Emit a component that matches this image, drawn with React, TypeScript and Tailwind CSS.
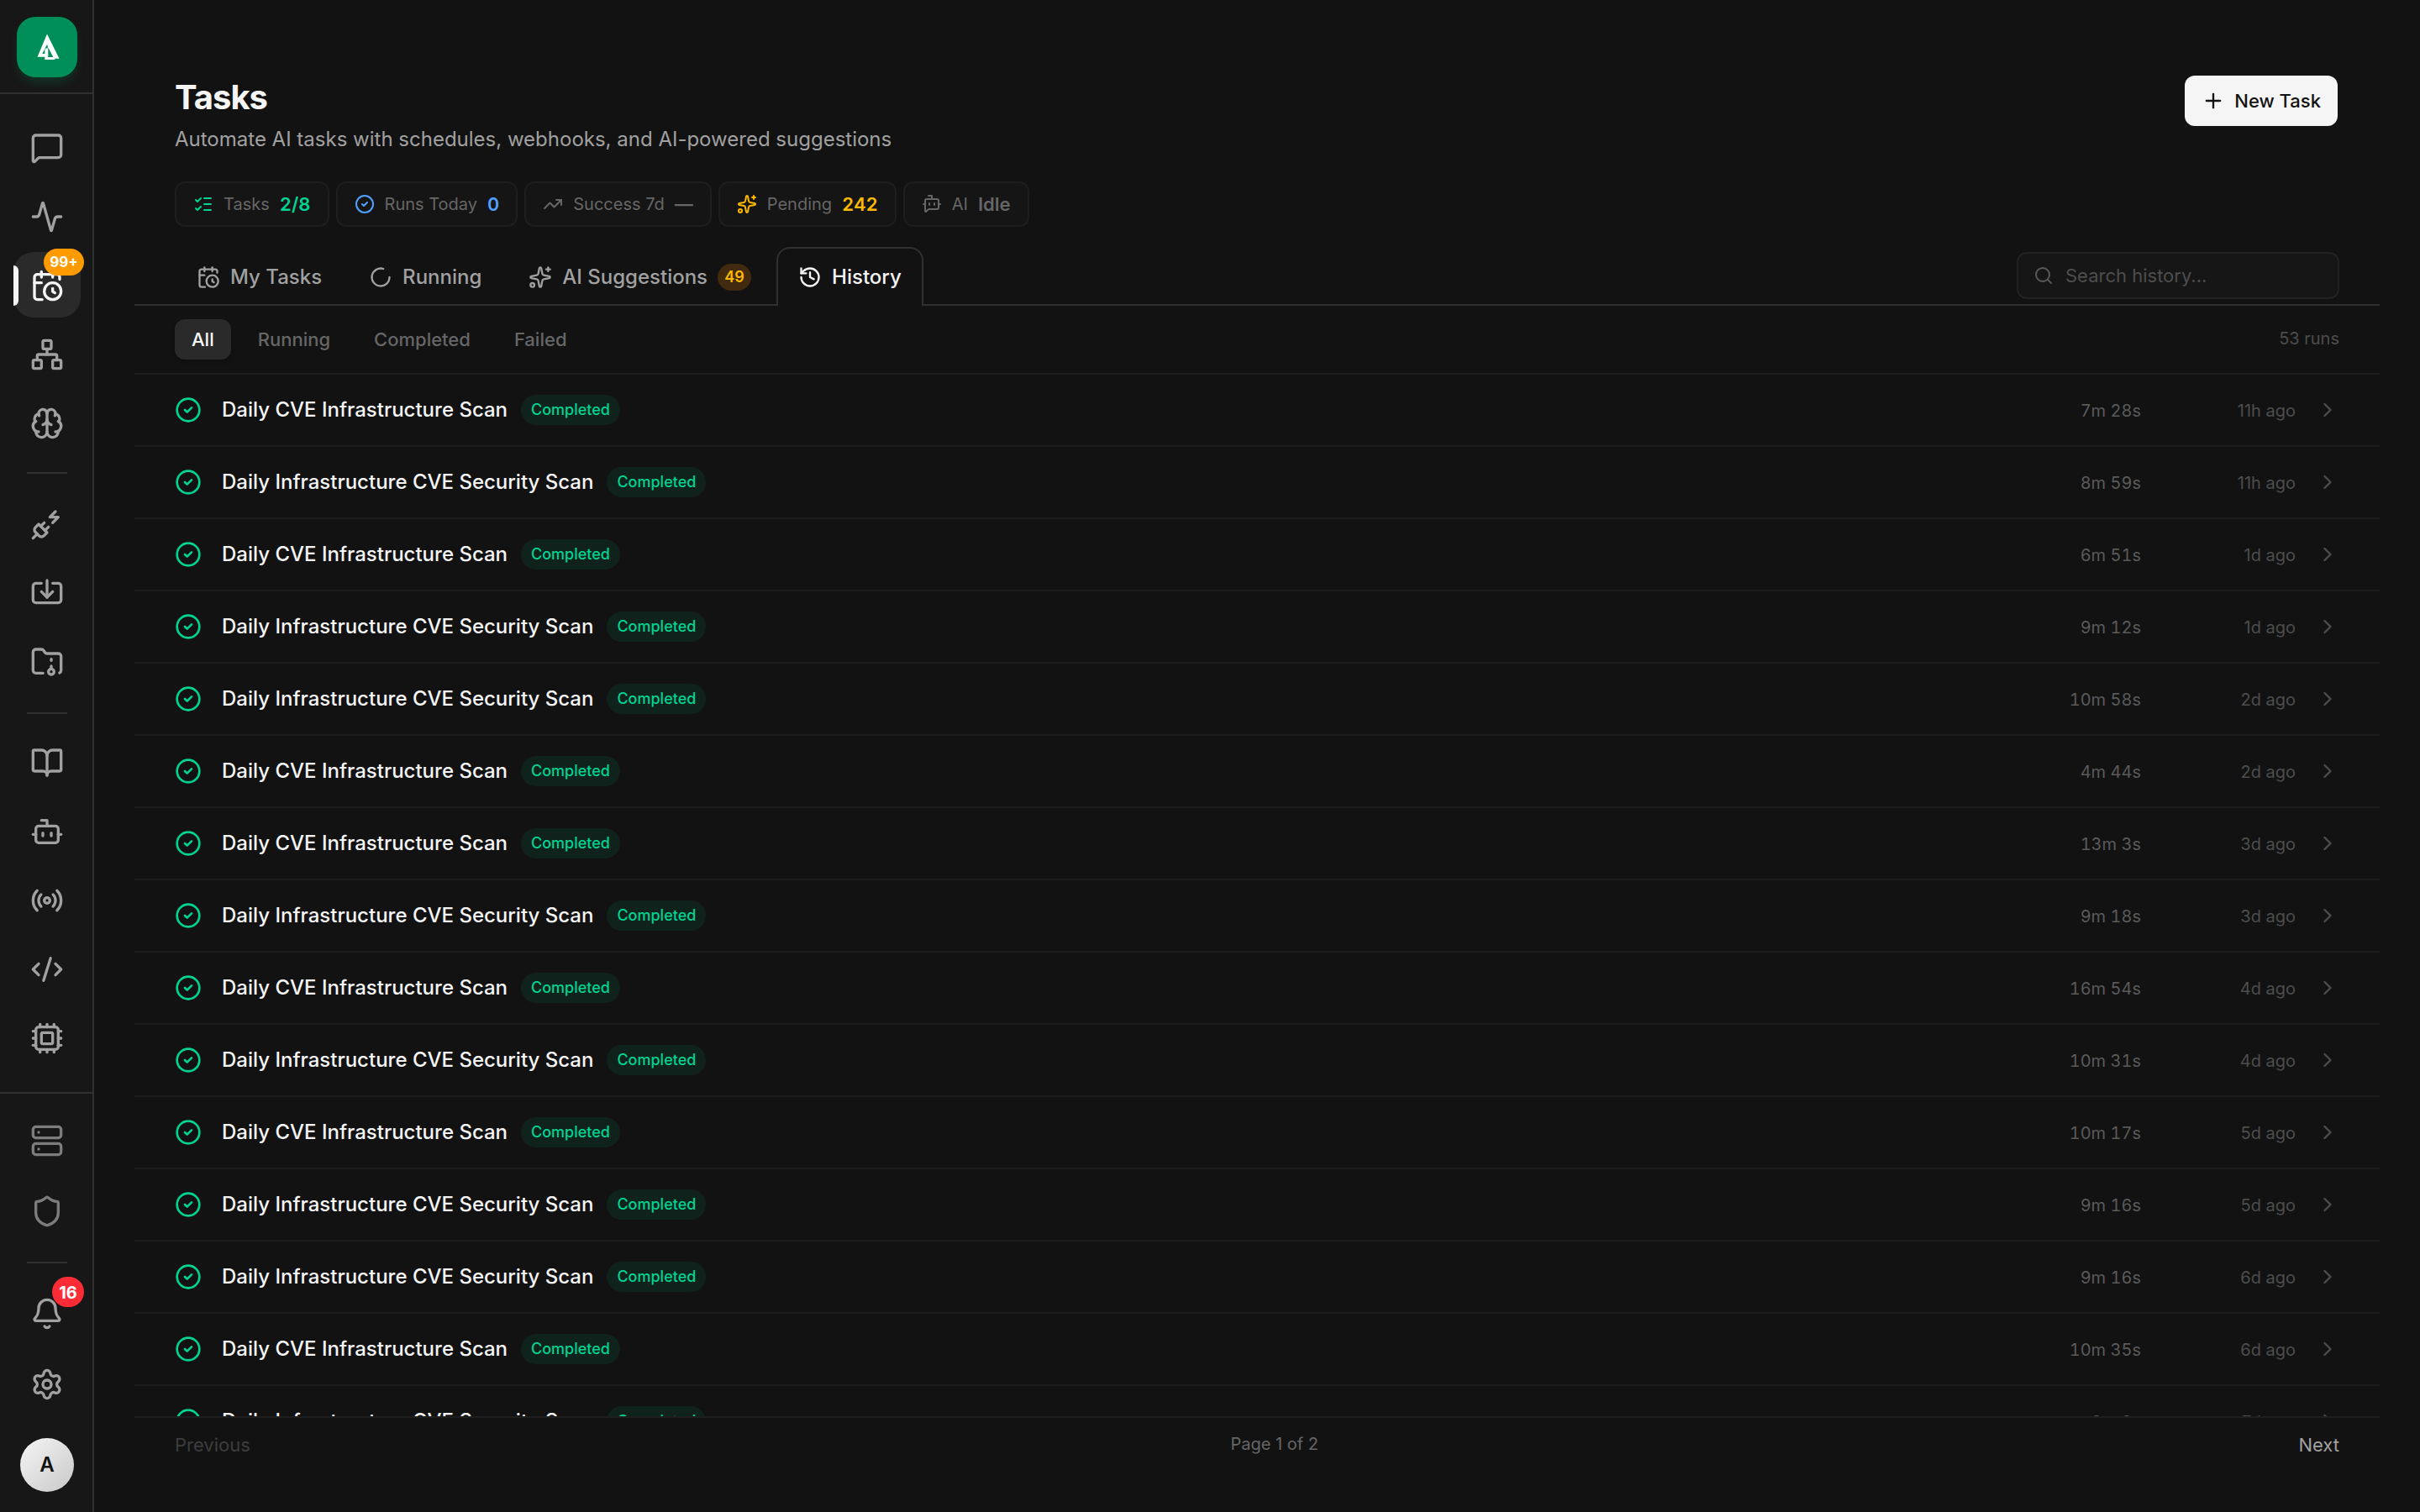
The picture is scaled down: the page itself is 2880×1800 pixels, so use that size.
import React, { useState } from 'react';
import {
  Activity, Bell, BookOpen, Bot, BotMessageSquare, Brain, CalendarClock, ChevronRight, CircleCheck,
  CodeXml, Cpu, FolderArchive, History, Import, ListChecks, LoaderCircle, MessageSquare, Network,
  PlugZap, Plus, Radio, Search, Server, Settings, Shield, Sparkles, TrendingUp,
} from 'lucide-react';

const SCAN = 'Daily CVE Infrastructure Scan';
const SECURITY = 'Daily Infrastructure CVE Security Scan';

const runs = [
  { name: SCAN, duration: '7m 28s', ago: '11h ago' },
  { name: SECURITY, duration: '8m 59s', ago: '11h ago' },
  { name: SCAN, duration: '6m 51s', ago: '1d ago' },
  { name: SECURITY, duration: '9m 12s', ago: '1d ago' },
  { name: SECURITY, duration: '10m 58s', ago: '2d ago' },
  { name: SCAN, duration: '4m 44s', ago: '2d ago' },
  { name: SCAN, duration: '13m 3s', ago: '3d ago' },
  { name: SECURITY, duration: '9m 18s', ago: '3d ago' },
  { name: SCAN, duration: '16m 54s', ago: '4d ago' },
  { name: SECURITY, duration: '10m 31s', ago: '4d ago' },
  { name: SCAN, duration: '10m 17s', ago: '5d ago' },
  { name: SECURITY, duration: '9m 16s', ago: '5d ago' },
  { name: SECURITY, duration: '9m 16s', ago: '6d ago' },
  { name: SCAN, duration: '10m 35s', ago: '6d ago' },
  { name: SECURITY, duration: '9m 8s', ago: '7d ago' },
];

const App = () => {
  const [tab, setTab] = useState('history');
  const [filter, setFilter] = useState('All');

  return (
    <div className="flex h-screen w-screen overflow-hidden bg-[#121212] font-['Inter',sans-serif] text-[#f5f5f5]">
      {/* SIDEBAR */}
      <aside className="flex w-28 shrink-0 flex-col border-r-2 border-[#303030] bg-[#171717]">
        <div className="flex h-28 shrink-0 items-center border-b-2 border-[#303030] pt-0.5 pl-5">
          <div className="flex h-18 w-18 items-center justify-center rounded-[22px] bg-[#008f58] shadow-[0_8px_12px_-2px_rgba(0,143,88,0.25)]">
            <Logo />
          </div>
        </div>

        <nav className="flex min-h-0 flex-1 flex-col items-center gap-1 py-6 pl-0.5">
          <NavButton icon={MessageSquare} title="Chat" />
          <NavButton icon={Activity} title="Activity" />
          <NavButton icon={CalendarClock} title="Tasks" active>
            <span className="absolute -top-1 -right-1 flex h-8 w-12 items-center justify-center rounded-full bg-[#ff9a00] pt-px text-[17px] font-bold text-white">99+</span>
          </NavButton>
          <NavButton icon={Network} title="Workflows" />
          <NavButton icon={Brain} title="Memory" />
          <Divider className="my-4" />
          <NavButton icon={PlugZap} title="Integrations" />
          <NavButton icon={Import} title="Imports" />
          <NavButton icon={FolderArchive} title="Artifacts" />
          <Divider className="mt-[18px] mb-[14px]" />
          <NavButton icon={BookOpen} title="Knowledge" />
          <NavButton icon={Bot} title="Agents" />
          <NavButton icon={Radio} title="Channels" />
          <NavButton icon={CodeXml} title="Code" />
          <NavButton icon={Cpu} title="Models" />
        </nav>

        <div className="flex shrink-0 flex-col items-center gap-1 border-t-2 border-[#303030] pt-4 pb-6 pl-0.5">
          <NavButton icon={Server} title="Servers" tall dim />
          <NavButton icon={Shield} title="Security" tall dim />
          <Divider className="my-4" />
          <NavButton icon={Bell} title="Notifications" tall>
            <span className="absolute -top-1 -right-1 flex h-9 w-[38px] items-center justify-center rounded-full bg-[#fb2c36] pt-0.5 text-xl font-bold text-white">16</span>
          </NavButton>
          <NavButton icon={Settings} title="Settings" tall />
          <div className="mt-5 flex h-16 w-16 items-center justify-center rounded-full bg-linear-to-br from-[#f5f5f5] to-[#c9c9c9] text-2xl font-semibold text-[#121212]">A</div>
        </div>
      </aside>

      {/* MAIN */}
      <main className="flex min-w-0 flex-1 flex-col px-12 pt-[90px]">
        <header className="flex items-start justify-between pr-[50px] pl-12">
          <div>
            <h1 className="text-[40px] leading-[52px] font-bold tracking-tight">Tasks</h1>
            <p className="mt-1.5 text-2xl leading-9 text-[#a1a1a1]">Automate AI tasks with schedules, webhooks, and AI-powered suggestions</p>
          </div>
          <button className="flex h-15 items-center gap-[11px] rounded-xl bg-[#f5f5f5] px-5 text-[22px] font-medium text-[#121212]">
            <Plus size={28} /> New Task
          </button>
        </header>

        <div className="mt-8 flex gap-2 px-12">
          <Stat icon={ListChecks} label="Tasks" value="2/8" color="text-[#00d492]" />
          <Stat icon={CircleCheck} label="Runs Today" value="0" color="text-[#51a2ff]" />
          <Stat icon={TrendingUp} label="Success 7d" value="—" color="text-[#666666]" />
          <Stat icon={Sparkles} label="Pending" value="242" color="text-[#ffb900]" />
          <Stat icon={BotMessageSquare} label="AI" value="Idle" color="text-[#666666]" />
        </div>

        {/* TABS */}
        <div className="mt-6 flex h-[70px] shrink-0 items-stretch justify-between border-b-2 border-[#303030] px-12">
          <div className="-mb-0.5 flex gap-1">
            <Tab icon={CalendarClock} label="My Tasks" active={tab === 'tasks'} onClick={() => setTab('tasks')} />
            <Tab icon={LoaderCircle} label="Running" active={tab === 'running'} onClick={() => setTab('running')} />
            <Tab icon={Sparkles} label="AI Suggestions" active={tab === 'ai'} onClick={() => setTab('ai')}>
              <span className="flex h-8 w-10 items-center justify-center rounded-full bg-[#412a0d] text-lg font-semibold text-[#ffb900]">49</span>
            </Tab>
            <Tab icon={History} label="History" active={tab === 'history'} onClick={() => setTab('history')} />
          </div>
          <div className="mt-1.5 flex h-14 w-96 items-center gap-3.5 rounded-xl border-2 border-[#222222] bg-[#161616] px-[18px]">
            <Search size={24} className="text-[#5a5a5a]" />
            <span className="text-[22px] text-[#4d4d4d]">Search history...</span>
          </div>
        </div>

        {/* FILTERS */}
        <div className="flex h-[82px] shrink-0 items-center justify-between border-b-2 border-[#1e1e1e] px-12">
          <div className="flex gap-3">
            {['All', 'Running', 'Completed', 'Failed'].map((name) => (
              <button
                key={name}
                onClick={() => setFilter(name)}
                className={`h-12 rounded-xl px-5 text-[22px] font-medium ${filter === name ? 'bg-[#2a2a2a] text-[#f5f5f5] shadow-md' : 'text-[#666666]'}`}
              >
                {name}
              </button>
            ))}
          </div>
          <span className="pb-0.5 text-xl text-[#4d4d4d]">53 runs</span>
        </div>

        <div className="min-h-0 flex-1 overflow-hidden">
          {runs.map((run, i) => (
            <div key={i} className="flex h-[86px] items-center border-b-2 border-[#1c1c1c] px-12">
              <CircleCheck size={32} className="text-[#00d492]" />
              <span className="ml-6 text-2xl font-medium">{run.name}</span>
              <span className="ml-4 flex h-9 items-center rounded-full bg-[#10221c] px-3 text-lg font-medium text-[#00d492]">Completed</span>
              <span className="ml-auto pt-0.5 text-xl text-[#5a5a5a] tabular-nums">{run.duration}</span>
              <span className="ml-6 w-40 pt-0.5 text-right text-xl text-[#4d4d4d]">{run.ago}</span>
              <ChevronRight size={28} className="ml-6 text-[#4d4d4d]" />
            </div>
          ))}
        </div>

        <footer className="flex h-[114px] shrink-0 items-start justify-between border-t-2 border-[#1e1e1e] px-12 pt-[14px] text-[22px] leading-9">
          <span className="text-[#3d3d3d]">Previous</span>
          <span className="text-xl leading-[34px] text-[#666666]">Page 1 of 2</span>
          <span className="text-[#a1a1a1]">Next</span>
        </footer>
      </main>
    </div>
  );
};

const NavButton = ({ icon: Icon, title, active, dim, tall, children }: any) => (
  <button
    title={title}
    className={`relative flex w-20 shrink-0 items-center justify-center rounded-3xl ${tall ? 'h-20' : 'h-[78px] pt-0.5'} ${active ? 'bg-[#2a2a2a] text-[#f5f5f5]' : dim ? 'text-[#7c7c7c]' : 'text-[#a1a1a1]'}`}
  >
    {active && <span className="absolute top-4 left-0 h-12 w-1.5 rounded-r-full bg-[#f5f5f5]" />}
    <Icon size={40} />
    {children}
  </button>
);

const Divider = ({ className }: any) => <div className={`h-0.5 w-12 shrink-0 bg-[#303030] ${className}`} />;

const Stat = ({ icon: Icon, label, value, color }: any) => (
  <div className="flex h-[54px] items-center gap-3 rounded-xl border-2 border-[#1e1e1e] bg-[#151515] px-5">
    <Icon size={24} className={color} />
    <span className="text-xl text-[#666666]">{label}</span>
    <span className={`text-[22px] font-semibold tabular-nums ${color}`}>{value}</span>
  </div>
);

const Tab = ({ icon: Icon, label, active, onClick, children }: any) => (
  <button
    onClick={onClick}
    className={`flex items-center gap-3 rounded-t-2xl border-2 border-b-0 px-6 text-2xl font-medium ${active ? 'border-[#303030] bg-[#121212] text-[#f5f5f5]' : 'border-transparent text-[#a1a1a1]'}`}
  >
    <Icon size={28} />
    {label}
    {children}
  </button>
);

const Logo = () => (
  <svg width="30" height="34" viewBox="0 0 30 34" fill="none">
    <path d="M15 1.5 29.5 30.7H24.3V32H12.3V28.7H3.5Z" fill="#ffffff" />
    <path d="M15 14 9.3 25H12.3V20L13.5 18.5H15.8V16Z M16.3 17.5 22.3 29H16.3Z" fill="#008f58" />
  </svg>
);

export default App;
